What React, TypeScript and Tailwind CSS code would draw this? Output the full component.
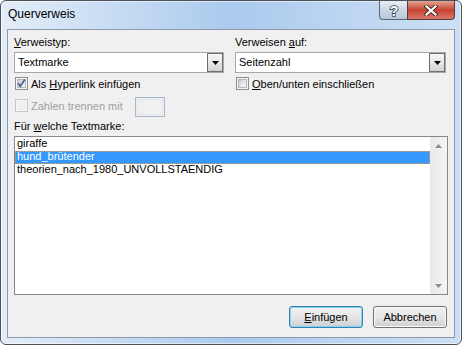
import React from "react";

function Check({ checked, disabled }: { checked?: boolean; disabled?: boolean }) {
  if (disabled) {
    return (
      <div className="w-[13px] h-[13px] shrink-0 border border-[#c7c7c7] bg-[#f6f6f6] p-[1px]">
        <div className="w-full h-full bg-[#f0f0f0]" />
      </div>
    );
  }
  return (
    <div className="w-[13px] h-[13px] shrink-0 border border-[#8e8f8f] bg-[#f4f4f4] p-[1px] relative">
      <div className="w-full h-full bg-linear-to-br from-[#c9cdd2] via-[#e3e5e8] to-[#fafafa] border border-[#b4b8bd]" />
      {checked && (
        <svg className="absolute left-0 top-0" width="11" height="11" viewBox="0 0 11 11">
          <path d="M2.2 5.2 L4.3 8.2 L8.8 1.6" fill="none" stroke="#4a5d8e" strokeWidth="1.7" />
        </svg>
      )}
    </div>
  );
}

function Combo({ value }: { value: string }) {
  return (
    <div className="h-[21px] flex border border-[#a5a9ad] bg-white">
      <div className="flex-1 pl-[3px] pt-[3px] leading-[13px] text-[#000]">{value}</div>
      <div className="w-[16px] h-[19px] border border-[#6f6f6f] bg-linear-to-b from-[#f6f6f6] via-[#e8e8e8] to-[#d2d2d2] flex items-center justify-center">
        <svg width="7" height="4" viewBox="0 0 7 4">
          <polygon points="0,0 7,0 3.5,4" fill="#000" />
        </svg>
      </div>
    </div>
  );
}

export default function App() {
  return (
    <div className="w-[462px] h-[345px] overflow-hidden rounded-[6px] border border-[#4b525a] bg-linear-to-r from-[#e3edf8] via-[#abcaee] to-[#cde0f5] shadow-[inset_0_0_0_1px_rgba(255,255,255,0.55)] font-['Liberation_Sans',Arial,sans-serif] text-[11px] text-black flex flex-col">
      {/* Title bar */}
      <div className="h-[28px] flex items-start shrink-0">
        <div className="pl-[7px] pt-[6px] text-[12px] leading-[15px] text-black">Querverweis</div>
        <div className="ml-auto mr-[6px] flex">
          <div className="w-[28px] h-[19px] rounded-bl-[4px] border border-t-0 border-r-0 border-[#5b6672] bg-linear-to-b from-[#e8eef5] via-[#cbd7e5] to-[#b6c6d9] flex items-center justify-center">
            <svg width="12" height="15" viewBox="0 0 12 15">
              <text x="6" y="12.5" textAnchor="middle" fontFamily="Liberation Sans, Arial, sans-serif" fontWeight="bold" fontSize="14" fill="#ffffff" stroke="#3b4450" strokeWidth="1.6" paintOrder="stroke">?</text>
            </svg>
          </div>
          <div className="w-[48px] h-[19px] rounded-br-[4px] border border-t-0 border-[#5a3a36] bg-linear-to-b from-[#e3a496] via-[#c5412f] to-[#d9786a] flex items-center justify-center">
            <svg width="14" height="11" viewBox="0 0 14 11">
              <path d="M2.5 1.5 L11.5 9.5 M11.5 1.5 L2.5 9.5" stroke="#4a2a26" strokeWidth="4" strokeLinecap="square" />
              <path d="M2.5 1.5 L11.5 9.5 M11.5 1.5 L2.5 9.5" stroke="#ffffff" strokeWidth="2.2" strokeLinecap="square" />
            </svg>
          </div>
        </div>
      </div>

      {/* Client area */}
      <div className="mx-[6px] h-[309px] shrink-0 border border-[#8c9aab] bg-[#f0f0f0] flex flex-col">
        <div className="pt-[6px] pl-[6px] grid grid-cols-[210px_211px] gap-x-[11px]">
          <div className="flex flex-col">
            <div className="leading-[13px]">
              <span className="underline">V</span>erweistyp:
            </div>
            <div className="mt-[3px]">
              <Combo value="Textmarke" />
            </div>
            <div className="mt-[4px] flex items-start pl-[1px]">
              <Check checked />
              <div className="ml-[3px] mt-[1px] leading-[13px]">
                Als <span className="underline">H</span>yperlink einfügen
              </div>
            </div>
            <div className="mt-[6px] flex items-start pl-[1px]">
              <div className="mt-[2px]">
                <Check disabled />
              </div>
              <div className="ml-[3px] mt-[3px] leading-[13px] text-[#a0a0a0]">Zahlen trennen mit</div>
              <div className="ml-[12px] w-[30px] h-[20px] border border-[#aab6c6] bg-[#f0f0f0] p-[1px]">
                <div className="w-full h-full border border-[#dde6f1]" />
              </div>
            </div>
          </div>
          <div className="flex flex-col">
            <div className="leading-[13px]">
              Verweisen <span className="underline">a</span>uf:
            </div>
            <div className="mt-[3px]">
              <Combo value="Seitenzahl" />
            </div>
            <div className="mt-[4px] flex items-start pl-[1px]">
              <Check />
              <div className="ml-[3px] mt-[1px] leading-[13px]">
                <span className="underline">O</span>ben/unten einschließen
              </div>
            </div>
          </div>
        </div>

        <div className="mt-[3px] pl-[6px] leading-[13px]">
          Für <span className="underline">w</span>elche Textmarke:
        </div>

        <div className="mt-[3px] ml-[6px] w-[434px] h-[159px] border border-[#828790] bg-white flex">
          <div className="flex-1 pt-[1px] flex flex-col">
            <div className="h-[13px] leading-[11px] pl-[2px]">giraffe</div>
            <div className="h-[13px] leading-[11px] pl-[2px] bg-[#3399ff] text-white outline-1 outline-dotted outline-[#f29a2e] -outline-offset-1">
              hund_brütender
            </div>
            <div className="h-[13px] leading-[11px] pl-[2px]">theorien_nach_1980_UNVOLLSTAENDIG</div>
          </div>
          <div className="w-[17px] bg-linear-to-r from-[#e9e9e9] to-[#f4f4f4] flex flex-col justify-between">
            <div className="h-[17px] flex items-center justify-center">
              <svg width="7" height="4" viewBox="0 0 7 4">
                <polygon points="3.5,0 7,4 0,4" fill="#8c8c8c" />
              </svg>
            </div>
            <div className="h-[17px] flex items-center justify-center">
              <svg width="7" height="4" viewBox="0 0 7 4">
                <polygon points="0,0 7,0 3.5,4" fill="#8c8c8c" />
              </svg>
            </div>
          </div>
        </div>

        <div className="mt-[11px] pr-[7px] flex justify-end gap-[10px]">
          <div className="w-[74px] h-[22px] rounded-[3px] border border-[#3c7fb1] shadow-[inset_0_0_0_1px_#7fd3f7] bg-linear-to-b from-[#f2f2f2] via-[#e6e6e6] to-[#cfcfcf] flex items-center justify-center leading-[13px]">
            <span>
              <span className="underline">E</span>infügen
            </span>
          </div>
          <div className="w-[74px] h-[22px] rounded-[3px] border border-[#707070] shadow-[inset_0_0_0_1px_#fcfcfc] bg-linear-to-b from-[#f2f2f2] via-[#e6e6e6] to-[#cfcfcf] flex items-center justify-center leading-[13px]">
            Abbrechen
          </div>
        </div>
      </div>
    </div>
  );
}
